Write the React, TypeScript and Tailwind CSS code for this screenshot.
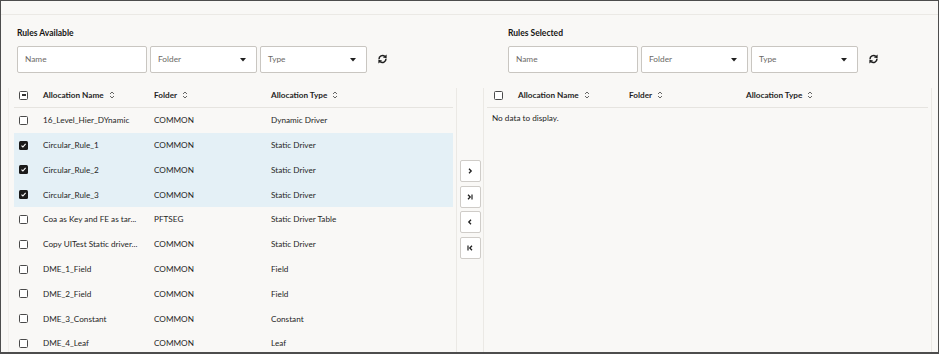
import React from "react";

const rows = [
  { name: "16_Level_Hier_DYnamic", folder: "COMMON", type: "Dynamic Driver", sel: false },
  { name: "Circular_Rule_1", folder: "COMMON", type: "Static Driver", sel: true },
  { name: "Circular_Rule_2", folder: "COMMON", type: "Static Driver", sel: true },
  { name: "Circular_Rule_3", folder: "COMMON", type: "Static Driver", sel: true },
  { name: "Coa as Key and FE as tar...", folder: "PFTSEG", type: "Static Driver Table", sel: false },
  { name: "Copy UITest Static driver...", folder: "COMMON", type: "Static Driver", sel: false },
  { name: "DME_1_Field", folder: "COMMON", type: "Field", sel: false },
  { name: "DME_2_Field", folder: "COMMON", type: "Field", sel: false },
  { name: "DME_3_Constant", folder: "COMMON", type: "Constant", sel: false },
  { name: "DME_4_Leaf", folder: "COMMON", type: "Leaf", sel: false },
];

function SortIcon() {
  return (
    <svg width="6" height="8" viewBox="0 0 6 8" className="ml-[5px] shrink-0">
      <path d="M1 3 L3 1 L5 3" stroke="#555" strokeWidth="0.9" fill="none" />
      <path d="M1 5 L3 7 L5 5" stroke="#555" strokeWidth="0.9" fill="none" />
    </svg>
  );
}

function Caret() {
  return (
    <svg width="6" height="4" viewBox="0 0 6 4" className="shrink-0">
      <path d="M0 0 L6 0 L3 3.5 Z" fill="#1f1f1f" />
    </svg>
  );
}

function RefreshIcon() {
  return (
    <svg width="11" height="12" viewBox="0 0 11 12">
      <path d="M2 6.2 A3.6 3.6 0 0 1 7.8 3.3" stroke="#1f1f1f" strokeWidth="1.5" fill="none" />
      <path d="M9.6 1.6 L9.6 5.3 L5.9 4.6 Z" fill="#1f1f1f" />
      <path d="M9 5.8 A3.6 3.6 0 0 1 3.2 8.7" stroke="#1f1f1f" strokeWidth="1.5" fill="none" />
      <path d="M1.4 10.4 L1.4 6.7 L5.1 7.4 Z" fill="#1f1f1f" />
    </svg>
  );
}

function Checkbox({ state }: { state: "off" | "on" | "mixed" }) {
  if (state === "on") {
    return (
      <div className="w-[9px] h-[9px] rounded-[1.5px] bg-[#1a1a1a] flex items-center justify-center">
        <svg width="7" height="7" viewBox="0 0 7 7">
          <path d="M1.5 3.6 L2.9 5 L5.6 1.8" stroke="#fff" strokeWidth="1.1" fill="none" />
        </svg>
      </div>
    );
  }
  return (
    <div className="w-[9px] h-[9px] rounded-[1.5px] border-[1.3px] border-[#4a4a4a] bg-white flex items-center justify-center">
      {state === "mixed" && <div className="w-[4px] h-[1.2px] bg-[#333]" />}
    </div>
  );
}

function Filters({ title }: { title: string }) {
  return (
    <div className="flex flex-col">
      <div className="h-[12px] leading-[12px] text-[8.5px] font-bold text-[#161513] mt-[1px]">{title}</div>
      <div className="flex items-center gap-[3px] mt-[7px]">
        <div className="w-[130px] h-[27px] bg-white border border-[#c9c6c1] rounded-[2px] flex items-center pl-[7px] text-[8.3px] text-[#6b6966]">
          Name
        </div>
        <div className="w-[107px] h-[27px] bg-white border border-[#c9c6c1] rounded-[2px] flex items-center justify-between pl-[7px] pr-[10px] text-[8.3px] text-[#6b6966]">
          <span>Folder</span>
          <Caret />
        </div>
        <div className="w-[107px] h-[27px] bg-white border border-[#c9c6c1] rounded-[2px] flex items-center justify-between pl-[7px] pr-[10px] text-[8.3px] text-[#6b6966]">
          <span>Type</span>
          <Caret />
        </div>
        <div className="ml-[7px] mb-[2px] flex items-center">
          <RefreshIcon />
        </div>
      </div>
    </div>
  );
}

function NavButton({ kind }: { kind: "right" | "last" | "left" | "first" }) {
  return (
    <div className="w-[21px] h-[22px] bg-white border border-[#cfccc8] rounded-[2px] flex items-center justify-center">
      <svg width="8" height="8" viewBox="0 0 8 8">
        {kind === "right" && <path d="M3 1.8 L5.2 4 L3 6.2" stroke="#1f1f1f" strokeWidth="1.3" fill="none" />}
        {kind === "left" && <path d="M5 1.8 L2.8 4 L5 6.2" stroke="#1f1f1f" strokeWidth="1.3" fill="none" />}
        {kind === "last" && (
          <>
            <path d="M2 1.8 L4.2 4 L2 6.2" stroke="#1f1f1f" strokeWidth="1.3" fill="none" />
            <path d="M6 1.5 L6 6.5" stroke="#1f1f1f" strokeWidth="1.2" />
          </>
        )}
        {kind === "first" && (
          <>
            <path d="M2 1.5 L2 6.5" stroke="#1f1f1f" strokeWidth="1.2" />
            <path d="M6 1.8 L3.8 4 L6 6.2" stroke="#1f1f1f" strokeWidth="1.3" fill="none" />
          </>
        )}
      </svg>
    </div>
  );
}

export default function App() {
  return (
    <div className="w-[939px] h-[354px] bg-[#f9f8f6] border border-b-2 border-[#4d4d4d] overflow-hidden text-[#1f1f1f] font-['Lato',sans-serif]">
      <div className="h-[14px] border-b border-[#ebe9e5]" />
      {/* Filters row */}
      <div className="flex h-[73px] pt-[11px]">
        <div className="pl-[16px] w-[491px]">
          <Filters title="Rules Available" />
        </div>
        <div className="pl-[16px]">
          <Filters title="Rules Selected" />
        </div>
      </div>
      {/* Tables row */}
      <div className="flex h-[300px]">
        {/* Left table */}
        <div className="ml-[7px] w-[449px] border-r border-[#ebe9e5] border-l border-l-[#f1efec] pl-[5px] pr-[3px]">
          <div className="h-[20px] pt-[1px] flex items-start text-[8.2px] font-bold leading-[12px] border-b border-[#e6e4e0]">
            <div className="w-[29px] pl-[5px] pt-[1.5px]">
              <Checkbox state="mixed" />
            </div>
            <div className="w-[111px] flex items-center">
              Allocation Name <SortIcon />
            </div>
            <div className="w-[117px] flex items-center">
              Folder <SortIcon />
            </div>
            <div className="flex items-center">
              Allocation Type <SortIcon />
            </div>
          </div>
          {rows.map((r) => (
            <div
              key={r.name}
              className={`h-[24.8px] flex items-center text-[8.2px] ${r.sel ? "bg-[#e4f0f6]" : ""}`}
            >
              <div className="w-[29px] pl-[5px]">
                <Checkbox state={r.sel ? "on" : "off"} />
              </div>
              <div className="w-[111px] whitespace-nowrap">{r.name}</div>
              <div className="w-[117px]">{r.folder}</div>
              <div>{r.type}</div>
            </div>
          ))}
        </div>
        {/* Middle buttons */}
        <div className="w-[27px] border-r border-[#ebe9e5] flex flex-col items-center pt-[72px] gap-[3.6px]">
          <NavButton kind="right" />
          <NavButton kind="last" />
          <NavButton kind="left" />
          <NavButton kind="first" />
        </div>
        {/* Right table */}
        <div className="w-[448px] border-r border-[#ebe9e5] pl-[3px] pr-[3px]">
          <div className="h-[20px] pt-[1px] flex items-start text-[8.2px] font-bold leading-[12px] border-b border-[#e6e4e0]">
            <div className="w-[31px] pl-[7px] pt-[1.5px]">
              <Checkbox state="off" />
            </div>
            <div className="w-[111px] flex items-center">
              Allocation Name <SortIcon />
            </div>
            <div className="w-[117px] flex items-center">
              Folder <SortIcon />
            </div>
            <div className="flex items-center">
              Allocation Type <SortIcon />
            </div>
          </div>
          <div className="pl-[5px] pt-[4px] text-[8.2px] leading-[12px]">No data to display.</div>
        </div>
      </div>
    </div>
  );
}
